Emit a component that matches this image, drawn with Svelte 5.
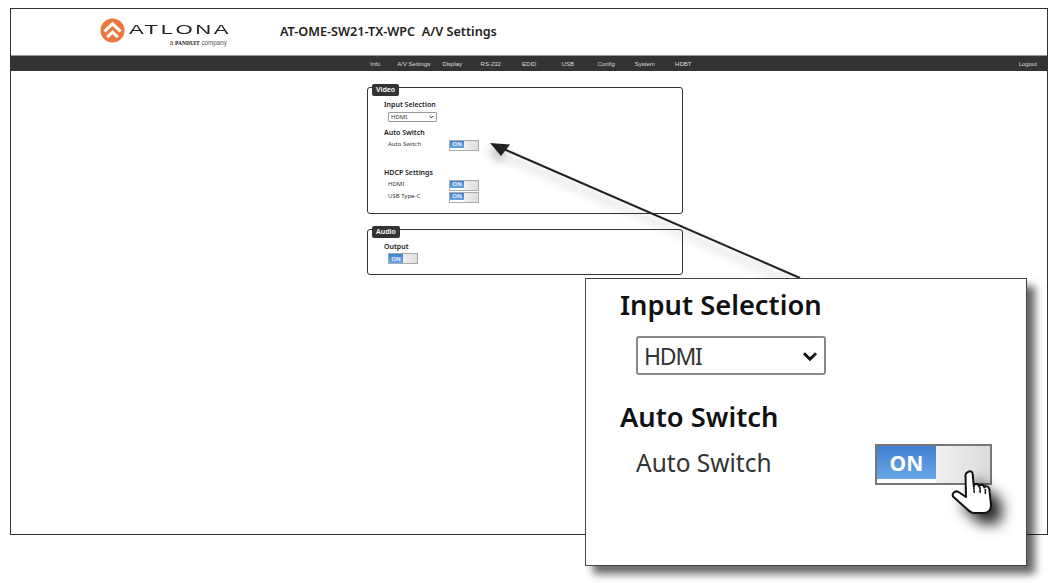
<script>
	const navItems = ["Info", "A/V Settings", "Display", "RS-232", "EDID", "USB", "Config", "System", "HDBT"];
</script>

{#snippet toggle()}
	<span class="toggle"><span class="on">ON</span><span class="off"></span></span>
{/snippet}

{#snippet chevron()}
	<svg class="chevron" viewBox="0 0 12 8" aria-hidden="true"><path d="M1.5 1.5 6 6l4.5-4.5" fill="none" stroke="#111" stroke-width="2.2" /></svg>
{/snippet}

<div class="frame">
	<header>
		<div class="logo">
			<svg class="mark" viewBox="0 0 26 26" aria-hidden="true">
				<circle cx="13" cy="13" r="12.5" fill="#e9773e" />
				<path d="M4.600 14 13 6.200 21.400 14" fill="none" stroke="#fff" stroke-width="3.200" />
				<path d="M7.500 20 13 14.800 18.500 20" fill="none" stroke="#fff" stroke-width="3.200" />
			</svg>
			<div class="brand">
				<span class="word">ATLONA</span>
				<span class="sub">a <b>PANDUIT</b> company</span>
			</div>
		</div>
		<h1>AT-OME-SW21-TX-WPC&nbsp; A/V Settings</h1>
	</header>

	<nav>
		{#each navItems as item}
			<a href="#top">{item}</a>
		{/each}
		<a class="logout" href="#top">Logout</a>
	</nav>

	<main>
		<section class="panel video">
			<span class="tab">Video</span>
			<h3>Input Selection</h3>
			<div class="select-wrap">
				<select><option>HDMI</option></select>
				{@render chevron()}
			</div>
			<h3 class="auto">Auto Switch</h3>
			<div class="row first"><span>Auto Switch</span>{@render toggle()}</div>
			<h3 class="hdcp">HDCP Settings</h3>
			<div class="row first"><span>HDMI</span>{@render toggle()}</div>
			<div class="row"><span>USB Type-C</span>{@render toggle()}</div>
		</section>

		<section class="panel audio">
			<span class="tab">Audio</span>
			<h3>Output</h3>
			<div class="output">{@render toggle()}</div>
		</section>
	</main>
</div>

<svg class="arrow" viewBox="0 0 1059 583" aria-hidden="true">
	<path d="M800 278 499 147" fill="none" stroke="#222" stroke-width="2" />
	<path d="M490 143 510 144.500 501 156Z" fill="#222" />
</svg>

<aside class="callout">
	<h3>Input Selection</h3>
	<div class="select-wrap">
		<select><option>HDMI</option></select>
		{@render chevron()}
	</div>
	<h3 class="auto">Auto Switch</h3>
	<div class="row"><span>Auto Switch</span>{@render toggle()}</div>
	<svg class="hand" viewBox="0 0 44 46" aria-hidden="true">
		<path d="M18 2c2-1.500 4.500-.5 4.700 2l1 12c0-2.500 5-3 5.300.5 .5-2.500 5-2.500 5.300 1 .5-2 4.700-1.500 5 1.500L41 35c0 5-3 8-7 8H24c-3 0-5-2-7-4L3.500 27c-2.500-3 1.500-7 5-5L16 27 15.500 5c0-1 1-2.300 2.500-3Z" fill="#fff" stroke="#111" stroke-width="2" stroke-linejoin="round" />
		<path d="M23.800 16l.4 7M30 17l.2 6M35.300 19l.1 5" fill="none" stroke="#111" stroke-width="1.500" />
	</svg>
</aside>

<style>
	:global(body) {
		background: #fff;
		overflow: hidden;
	}

	.frame {
		box-sizing: border-box;
		height: 527px;
		margin: 8px 11px 0 10px;
		border: 1px solid #333;
		font-family: "Noto Sans", sans-serif;
		color: #222;
	}

	header {
		display: flex;
		align-items: center;
		height: 46px;
		padding: 0 0 3px 89px;
		box-sizing: border-box;
	}

	.logo {
		display: flex;
		gap: 4px;
		width: 180px;
		height: 26px;
		margin-top: 1px;
	}

	.mark {
		width: 25px;
		height: 25px;
		flex: none;
	}

	.brand {
		display: flex;
		flex-direction: column;
		align-items: flex-end;
		width: 100px;
		font-family: "Liberation Sans", sans-serif;
	}

	.word {
		display: inline-block;
		font-size: 13px;
		line-height: 15px;
		letter-spacing: 1.500px;
		color: #222;
		transform: scaleX(1.7);
		transform-origin: right center;
		margin-top: 4px;
		margin-right: -2px;
	}

	.sub {
		font-size: 6.300px;
		line-height: 9px;
		color: #555;
		margin-top: 1px;
		margin-right: 2px;
	}

	.sub b {
		color: #111;
		font-family: "Liberation Serif", serif;
		font-size: 5.500px;
	}

	h1 {
		margin: 0;
		font-size: 12.630px;
		font-weight: 600;
		color: #222;
	}

	nav {
		display: flex;
		align-items: center;
		height: 16px;
		padding: 0 10px 0 345px;
		background: #333;
		border-top: 1px solid #999;
		box-sizing: border-box;
		font-family: "Liberation Sans", sans-serif;
		font-size: 6px;
	}

	nav a {
		width: 38.500px;
		text-align: center;
		color: #ddd;
		text-decoration: none;
	}

	nav a.logout {
		width: auto;
		margin-left: auto;
	}

	main {
		display: flex;
		flex-direction: column;
		gap: 15px;
		padding: 16px 0 0 356px;
	}

	.panel {
		position: relative;
		box-sizing: border-box;
		width: 316px;
		padding: 12px 0 0 16px;
		border: 1px solid #333;
		border-radius: 3px;
		font-size: 6px;
	}

	.video {
		height: 127px;
	}

	.audio {
		height: 46px;
	}

	.tab {
		position: absolute;
		top: -4px;
		left: 4px;
		padding: 0 4px;
		height: 12px;
		line-height: 11px;
		border-radius: 2px;
		background: #333;
		color: #fff;
		font-size: 7px;
		font-weight: 600;
	}

	.panel h3 {
		margin: 0;
		font-size: 7px;
		line-height: 9px;
		font-weight: 600;
		color: #222;
	}

	.panel .select-wrap {
		position: relative;
		width: 49px;
		height: 10px;
		margin: 3px 0 0 4px;
	}

	select {
		appearance: none;
		display: block;
		box-sizing: border-box;
		width: 100%;
		height: 100%;
		padding: 0 0 0 2px;
		border: 1px solid #999;
		border-radius: 1px;
		background: #fff;
		font: inherit;
		color: #333;
	}

	.chevron {
		position: absolute;
		top: 50%;
		right: 3px;
		width: 5px;
		height: 4px;
		margin-top: -2px;
		pointer-events: none;
	}

	.panel h3.auto {
		margin-top: 6px;
	}

	.panel h3.hdcp {
		margin-top: 17px;
	}

	.row {
		display: flex;
		align-items: center;
		color: #333;
	}

	.panel .row {
		height: 12px;
		padding-left: 4px;
	}

	.panel .row span:first-child {
		width: 61px;
		margin-bottom: 2px;
	}

	.panel .row.first {
		margin-top: 2px;
	}

	.output {
		margin: 2px 0 0 4px;
	}

	.toggle {
		display: flex;
		box-sizing: border-box;
		width: 30px;
		height: 11px;
		border: 1px solid #aaa;
	}

	.on {
		display: flex;
		align-items: center;
		justify-content: center;
		flex: 0 0 50%;
		background: linear-gradient(#3f80d0, #6ba5e8);
		color: #fff;
		font-size: 6px;
		font-weight: 600;
	}

	.off {
		flex: 1;
		background: linear-gradient(90deg, #f0f0f0, #ddd);
	}

	.arrow {
		position: absolute;
		top: 0;
		left: 0;
		width: 1059px;
		height: 583px;
		filter: drop-shadow(-2px 6px 5px rgba(0, 0, 0, 0.3));
		pointer-events: none;
	}

	.callout {
		position: absolute;
		top: 278px;
		left: 585px;
		box-sizing: border-box;
		width: 442px;
		height: 288px;
		padding: 8px 0 0 34px;
		background: #fff;
		border: 1px solid #444;
		box-shadow: 8px 8px 8px rgba(0, 0, 0, 0.6);
		font-family: "Noto Sans", sans-serif;
		color: #222;
	}

	.callout h3 {
		margin: 0;
		font-size: 27.300px;
		line-height: 36px;
		font-weight: 600;
		color: #111;
	}

	.callout .select-wrap {
		position: relative;
		width: 190px;
		height: 39px;
		margin: 13px 0 0 16px;
	}

	.callout select {
		padding-left: 6px;
		border: 2px solid #888;
		border-radius: 3px;
		font-size: 23px;
		letter-spacing: -1.200px;
	}

	.callout .chevron {
		right: 8px;
		width: 16px;
		height: 11px;
		margin-top: -5px;
	}

	.callout h3.auto {
		margin-top: 24px;
	}

	.callout .row {
		padding-left: 16px;
		margin-top: 9px;
		font-size: 24.500px;
		color: #333;
	}

	.callout .row span:first-child {
		width: 239px;
		margin-bottom: 4px;
	}

	.callout .toggle {
		width: 117px;
		height: 41px;
		border: 2px solid #777;
	}

	.callout .on {
		flex: 0 0 52%;
		font-size: 21px;
		font-weight: 700;
	}

	.hand {
		position: absolute;
		top: 191px;
		left: 364px;
		width: 44px;
		height: 46px;
		filter: drop-shadow(10px 10px 7px rgba(0, 0, 0, 0.85));
	}
</style>
